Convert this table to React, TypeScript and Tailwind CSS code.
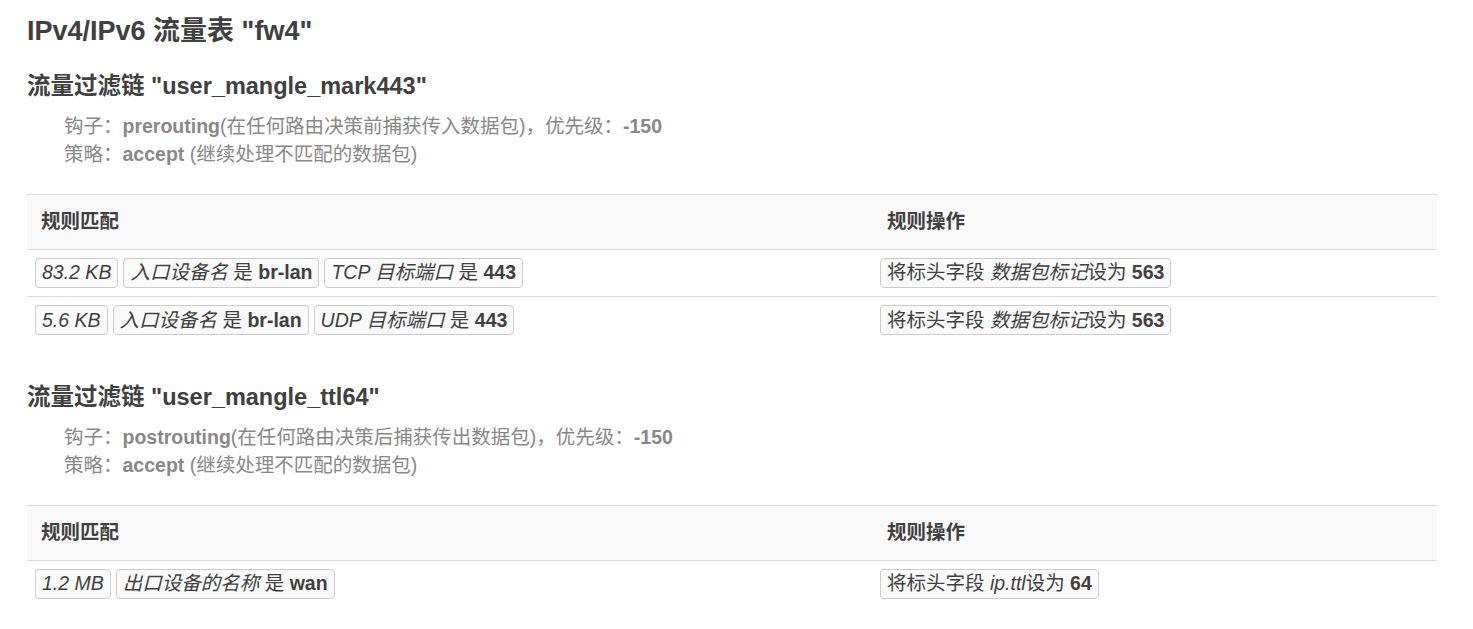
import React from 'react';

// 单个徽章
const Badge = ({ children }: { children: React.ReactNode }) => (
  <span className="inline-flex items-center h-[30px] px-[6px] border border-[#ccc] rounded-[4px] bg-[#fafafa] text-[#404040] whitespace-nowrap">
    {children}
  </span>
);

type Rule = { match: React.ReactNode[]; action: React.ReactNode };

type Chain = {
  name: string;
  hook: string;
  hookDesc: string;
  priority: string;
  rules: Rule[];
};

const chains: Chain[] = [
  {
    name: 'user_mangle_mark443',
    hook: 'prerouting',
    hookDesc: '(在任何路由决策前捕获传入数据包)，优先级：',
    priority: '-150',
    rules: [
      {
        match: [
          <i>83.2 KB</i>,
          <>
            <i>入口设备名</i>&nbsp;是&nbsp;<b>br-lan</b>
          </>,
          <>
            <i>TCP 目标端口</i>&nbsp;是&nbsp;<b>443</b>
          </>,
        ],
        action: (
          <>
            将标头字段&nbsp;<i>数据包标记</i>设为&nbsp;<b>563</b>
          </>
        ),
      },
      {
        match: [
          <i>5.6 KB</i>,
          <>
            <i>入口设备名</i>&nbsp;是&nbsp;<b>br-lan</b>
          </>,
          <>
            <i>UDP 目标端口</i>&nbsp;是&nbsp;<b>443</b>
          </>,
        ],
        action: (
          <>
            将标头字段&nbsp;<i>数据包标记</i>设为&nbsp;<b>563</b>
          </>
        ),
      },
    ],
  },
  {
    name: 'user_mangle_ttl64',
    hook: 'postrouting',
    hookDesc: '(在任何路由决策后捕获传出数据包)，优先级：',
    priority: '-150',
    rules: [
      {
        match: [
          <i>1.2 MB</i>,
          <>
            <i>出口设备的名称</i>&nbsp;是&nbsp;<b>wan</b>
          </>,
        ],
        action: (
          <>
            将标头字段&nbsp;<i>ip.ttl</i>设为&nbsp;<b>64</b>
          </>
        ),
      },
    ],
  },
];

const ChainBlock = ({ chain, first }: { chain: Chain; first: boolean }) => (
  <div className={first ? 'mt-[21px]' : 'mt-[37px]'}>
    <h3 className="text-[23.5px] leading-[32px] font-bold text-[#404040]">
      流量过滤链 "{chain.name}"
    </h3>
    <div className="mt-[10px] pl-[37px] text-[#888] leading-[28px]">
      <div>
        钩子：<b>{chain.hook}</b>
        {chain.hookDesc}
        <b>{chain.priority}</b>
      </div>
      <div>
        策略：<b>accept</b> (继续处理不匹配的数据包)
      </div>
    </div>

    {/* 规则表 */}
    <table className="mt-[26px] w-[1410px] border-collapse">
      <thead>
        <tr className="bg-[#f9f9f9] border-t border-b border-[#ddd]">
          <th className="h-[55px] w-[845px] pl-[14px] text-left font-bold text-[#404040]">规则匹配</th>
          <th className="h-[55px] pl-[15px] text-left font-bold text-[#404040]">规则操作</th>
        </tr>
      </thead>
      <tbody>
        {chain.rules.map((rule, i) => (
          <tr key={i} className={i > 0 ? 'border-t border-[#ddd]' : ''}>
            <td className="h-[47px] pl-[8px] align-middle">
              <div className="flex gap-[5px]">
                {rule.match.map((m, j) => (
                  <Badge key={j}>{m}</Badge>
                ))}
              </div>
            </td>
            <td className="h-[47px] pl-[8px] align-middle">
              <div className="flex">
                <Badge>{rule.action}</Badge>
              </div>
            </td>
          </tr>
        ))}
      </tbody>
    </table>
  </div>
);

export default function App() {
  return (
    <div
      className="min-h-screen bg-white pl-[27px] pt-[13px] text-[19.5px] text-[#404040]"
      style={{ fontFamily: '"Liberation Sans", Arial, "Noto Sans CJK SC", sans-serif' }}
    >
      <h2 className="text-[27px] leading-[36px] font-bold text-[#404040]">IPv4/IPv6 流量表 "fw4"</h2>
      {chains.map((c, i) => (
        <ChainBlock key={c.name} chain={c} first={i === 0} />
      ))}
    </div>
  );
}
